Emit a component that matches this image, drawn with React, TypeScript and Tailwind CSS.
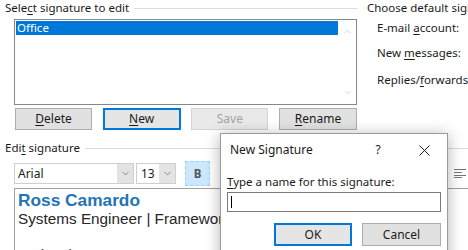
import { ChevronDown, ChevronUp } from "lucide-react";

const ui = "font-['Segoe_UI','Noto_Sans',sans-serif] text-[11.5px] leading-[14px] text-[#1a1a1a]";

function WinButton({ label, mnemonic, isDefault, disabled, className }: { label: string; mnemonic?: number; isDefault?: boolean; disabled?: boolean; className?: string }) {
  const i = mnemonic ?? -1;
  return (
    <div
      className={
        "flex items-center justify-center text-[12px] " +
        (isDefault
          ? "border-2 border-[#0078d7] bg-[#e5e5e5] "
          : disabled
            ? "border border-[#d4d4d4] bg-[#e9e9e9] text-[#a3a3a3] "
            : "border border-[#adadad] bg-[#e1e1e1] ") +
        (className ?? "")
      }
    >
      {i >= 0 ? (
        <span>
          {label.slice(0, i)}
          <span className="underline underline-offset-2">{label[i]}</span>
          {label.slice(i + 1)}
        </span>
      ) : (
        <span>{label}</span>
      )}
    </div>
  );
}

function GroupLabel({ text, u, className }: { text: string; u: number; className?: string }) {
  return (
    <div className={"flex items-center " + (className ?? "")}>
      <span className="whitespace-nowrap">
        {text.slice(0, u)}
        <span className="underline underline-offset-2">{text[u]}</span>
        {text.slice(u + 1)}
      </span>
      <div className="ml-[5px] h-px flex-1 bg-[#dcdcdc]" />
    </div>
  );
}

export default function App() {
  return (
    <div className={"relative h-[250px] w-[468px] overflow-hidden bg-white " + ui}>
      {/* top row */}
      <div className="flex h-[141px] pt-px">
        <div className="w-[360px] shrink-0">
          <GroupLabel text="Select signature to edit" u={4} className="pl-[5px] pr-[3px]" />
          <div className="ml-[14px] mt-[4px] flex h-[86px] w-[343px] border border-[#828790] bg-white">
            <div className="flex-1 p-px">
              <div className="h-[14px] bg-[#0078d7] pl-px text-white">Office</div>
            </div>
            <div className="flex w-[17px] flex-col items-center justify-between py-[6px] text-[#c2c2c2]">
              <ChevronUp size={11} strokeWidth={1.5} />
              <ChevronDown size={11} strokeWidth={1.5} />
            </div>
          </div>
          <div className="ml-[15px] mt-[3px] flex w-[342px] justify-between">
            <WinButton label="Delete" mnemonic={0} className="h-[22px] w-[77px]" />
            <WinButton label="New" mnemonic={0} isDefault className="h-[22px] w-[78px]" />
            <WinButton label="Save" disabled className="h-[22px] w-[77px]" />
            <WinButton label="Rename" mnemonic={0} className="h-[22px] w-[78px]" />
          </div>
        </div>
        <div className="flex-1 pl-[7px]">
          <div className="whitespace-nowrap">Choose default signature</div>
          <div className="ml-[10px] mt-[6px] flex flex-col gap-[11px] whitespace-nowrap">
            <div>E-mail <span className="underline underline-offset-2">a</span>ccount:</div>
            <div>New <span className="underline underline-offset-2">m</span>essages:</div>
            <div className="mt-[2px]">Replies/<span className="underline underline-offset-2">f</span>orwards:</div>
          </div>
        </div>
      </div>

      {/* edit signature */}
      <GroupLabel text="Edit signature" u={3} className="pl-[5px]" />
      <div className="ml-[14px] mt-[6px] flex items-center">
        <div className="flex h-[21px] w-[120px] border border-[#cfcfcf] bg-white">
          <div className="flex-1 pl-[3px] text-[12px] leading-[19px]">Arial</div>
          <div className="flex w-[16px] items-center justify-center bg-[#e3e3e3] text-[#606060]">
            <ChevronDown size={11} strokeWidth={1.5} />
          </div>
        </div>
        <div className="ml-[2px] flex h-[21px] w-[40px] border border-[#cfcfcf] bg-white">
          <div className="flex-1 pl-[4px] text-[12px] leading-[19px]">13</div>
          <div className="flex w-[16px] items-center justify-center bg-[#e3e3e3] text-[#606060]">
            <ChevronDown size={11} strokeWidth={1.5} />
          </div>
        </div>
        <div className="ml-[9px] flex h-[25px] w-[25px] items-center justify-center border border-dashed border-[#99d1ff] bg-[#cce8ff] font-bold text-[#555]">
          B
        </div>
        <div className="ml-[10px] h-[2px] w-px bg-[#555]" />
        <div className="ml-auto mr-[2px]">
          <svg width="12" height="9" viewBox="0 0 12 9" className="text-[#777]">
            <path d="M0 0.5h12M0 3.5h8M0 6.5h12M0 8.5h8" stroke="currentColor" strokeWidth="1" />
          </svg>
        </div>
      </div>
      <div className="ml-[14px] mt-[2px] h-[80px] w-[460px] border border-[#a0a0a0] bg-white pl-[3px] pt-[2px] font-['Liberation_Sans',Arial,sans-serif]">
        <div className="text-[17.3px] font-bold leading-[19px] text-[#2474b5]">Ross Camardo</div>
        <div className="text-[15.3px] leading-[18px] text-[#262626]">Systems Engineer | Framework Solutions</div>
        <div className="h-[18px]" />
        <div className="text-[15.3px] leading-[18px] text-[#262626]">O: (312) 205-9720</div>
      </div>

      {/* New Signature dialog */}
      <div className="absolute left-[220px] top-[133px] h-[140px] w-[228px] border border-[#9a9a9a] bg-white shadow-[0_2px_14px_rgba(0,0,0,0.3)]">
        <div className="flex h-[32px] items-center pl-[9px] text-[12px]">
          <span className="flex-1">New Signature</span>
          <span className="w-[46px] text-center">?</span>
          <div className="flex w-[46px] items-center justify-center">
            <svg width="11" height="11" viewBox="0 0 11 11">
              <path d="M0.5 0.5l10 10M10.5 0.5l-10 10" stroke="#1a1a1a" strokeWidth="1" />
            </svg>
          </div>
        </div>
        <div className="px-[6px] pt-[9px]">
          <div>
            <span className="underline underline-offset-2">T</span>ype a name for this signature:
          </div>
          <div className="mt-[3px] flex h-[20px] w-[214px] items-center border border-[#7a7a7a] bg-white pl-[3px]">
            <div className="h-[12px] w-px bg-black" />
          </div>
          <div className="mt-[11px] flex justify-end gap-[10px]">
            <WinButton label="OK" isDefault className="h-[23px] w-[78px]" />
            <WinButton label="Cancel" className="h-[23px] w-[79px]" />
          </div>
        </div>
      </div>
    </div>
  );
}
